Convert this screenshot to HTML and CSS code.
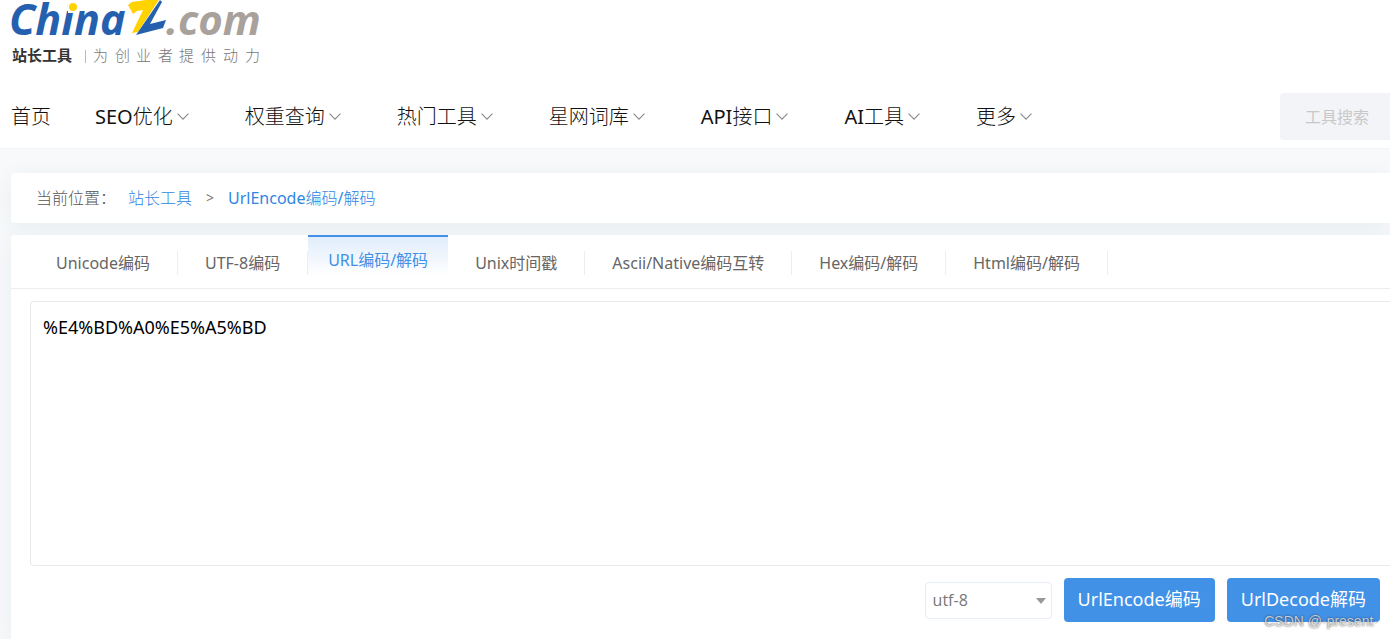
FILE: index.html
```html
<!DOCTYPE html>
<html lang="zh-CN">
<head>
<meta charset="utf-8">
<title>UrlEncode编码/解码 - 站长工具</title>
<link rel="stylesheet" href="styles.css">
</head>
<body>
<header class="header">
  <a class="logo" href="#">
    <svg width="252" height="68" viewBox="0 0 252 68" role="img" aria-label="ChinaZ.com 站长工具">
      <text class="logo-china" x="-2" y="35">China</text>
      <path d="M57 -2H70L67 13H57Z" fill="#fff"/>
      <circle cx="62" cy="7" r="4" fill="#ffd200"/>
      <path d="M117 5 L121 2 L149 -2 L127 32 L121 33 L132 10 L126 11 L122 14 Z" fill="#ffd200"/>
      <path d="M149 0 L151 2 L139 24 L155 20 L152 28 L125 35 Z" fill="#2560ae"/>
      <text class="logo-com" x="155" y="35">.com</text>
      <text class="logo-name" x="1" y="61">站长工具</text>
      <path d="M74.500 50V63" stroke="#bbb"/>
      <text class="logo-slogan" y="61" x="82 104 125 147 168 190 212 234">为创业者提供动力</text>
    </svg>
  </a>
  <div class="navbar">
    <nav class="nav">
      <a class="nav-item nav-home" href="#">首页</a>
      <a class="nav-item" href="#"><span><b>SEO</b>优化</span><svg class="chevron" viewBox="0 0 11 7"><path d="M.5 .5 5.500 5.500 10.500 .5"/></svg></a>
      <a class="nav-item" href="#">权重查询<svg class="chevron" viewBox="0 0 11 7"><path d="M.5 .5 5.500 5.500 10.500 .5"/></svg></a>
      <a class="nav-item" href="#">热门工具<svg class="chevron" viewBox="0 0 11 7"><path d="M.5 .5 5.500 5.500 10.500 .5"/></svg></a>
      <a class="nav-item" href="#">星网词库<svg class="chevron" viewBox="0 0 11 7"><path d="M.5 .5 5.500 5.500 10.500 .5"/></svg></a>
      <a class="nav-item" href="#"><span><b>API</b>接口</span><svg class="chevron" viewBox="0 0 11 7"><path d="M.5 .5 5.500 5.500 10.500 .5"/></svg></a>
      <a class="nav-item" href="#"><span><b>AI</b>工具</span><svg class="chevron" viewBox="0 0 11 7"><path d="M.5 .5 5.500 5.500 10.500 .5"/></svg></a>
      <a class="nav-item" href="#">更多<svg class="chevron" viewBox="0 0 11 7"><path d="M.5 .5 5.500 5.500 10.500 .5"/></svg></a>
    </nav>
    <input class="search" type="search" placeholder="工具搜索" aria-label="工具搜索">
  </div>
</header>
<main class="main">
  <div class="card crumbs">
    <span class="crumb-label">当前位置：</span>
    <a href="#">站长工具</a>
    <span class="crumb-sep">&gt;</span>
    <a href="#"><b>UrlEncode</b>编码<b>/</b>解码</a>
  </div>
  <section class="card tool">
    <nav class="tabs">
      <a class="tab" href="#">Unicode编码</a>
      <a class="tab" href="#">UTF-8编码</a>
      <a class="tab active" href="#" aria-current="page">URL编码/解码</a>
      <a class="tab" href="#">Unix时间戳</a>
      <a class="tab" href="#">Ascii/Native编码互转</a>
      <a class="tab" href="#">Hex编码/解码</a>
      <a class="tab" href="#">Html编码/解码</a>
    </nav>
    <form class="form">
      <textarea class="editor" aria-label="编码内容" spellcheck="false">%E4%BD%A0%E5%A5%BD</textarea>
      <div class="actions">
        <span class="charset">
          <select aria-label="字符编码"><option>utf-8</option><option>gb2312</option></select>
          <svg class="caret" viewBox="0 0 10 6"><path d="M0 0H10L5 6Z"/></svg>
        </span>
        <button class="btn" type="button">UrlEncode编码</button>
        <button class="btn" type="button">UrlDecode解码</button>
      </div>
    </form>
  </section>
</main>
<div class="watermark">CSDN @·present·</div>
</body>
</html>
```
FILE: styles.css
```css
* { box-sizing: border-box; }
body {
  margin: 0;
  min-height: 100vh;
  display: flex;
  flex-direction: column;
  position: relative;
  overflow: hidden;
  background: #f8f9fb;
  color: #666;
  font: 16px/24px "Noto Sans", "Noto Sans CJK SC", sans-serif;
}
a { color: #4191e7; text-decoration: none; }
b { font-weight: 400; }
.header { background: #fff; border-bottom: 1px solid #f3f4f6; }
.logo { display: block; padding-left: 11px; height: 68px; }
.logo svg { display: block; overflow: visible; }
.logo-china { font: italic 700 43px "Open Sans", sans-serif; fill: #2560ae; }
.logo-com { font: italic 700 42px "Open Sans", sans-serif; fill: #a9a19b; }
.logo-name { font: 700 15px "Noto Sans CJK SC", sans-serif; fill: #333; }
.logo-slogan { font: 300 15px "Noto Sans CJK SC", sans-serif; fill: #777; }
.navbar { display: flex; justify-content: space-between; padding: 25px 0 8px 11px; }
.nav { display: flex; align-items: center; gap: 56px; }
.nav-item {
  display: flex;
  align-items: center;
  gap: 4px;
  color: #111;
  font-size: 20px;
  font-weight: 300;
  line-height: 30px;
  white-space: nowrap;
}
.nav-home { margin-right: -12px; }
.chevron { width: 12px; height: 8px; fill: none; stroke: #888; }
.search {
  width: 110px;
  height: 47px;
  padding: 0 0 0 25px;
  border: 0;
  border-radius: 4px 0 0 4px;
  background: #f3f4f8;
  font: inherit;
}
.search::placeholder { color: #c8c8c8; opacity: 1; }
.main { flex: 1; display: flex; flex-direction: column; gap: 12px; padding: 24px 0 0 11px; }
.card { background: #fff; border-radius: 4px 0 0 4px; box-shadow: 0 4px 20px #dce8ea90; }
.crumbs { display: flex; align-items: center; padding: 13px 25px; font-weight: 300; }
.crumbs a { color: #2f86e4; }
.crumb-label { margin-right: 12px; color: #555; }
.crumb-sep { margin: 0 14px; font-size: 14px; font-weight: 400; color: #777; }
.tool { flex: 1; border-bottom-left-radius: 0; }
.tabs { display: flex; height: 54px; padding-left: 18px; border-bottom: 1px solid #eee; }
.tab {
  display: flex;
  height: 24px;
  margin-top: 16px;
  padding: 0 27px;
  border-right: 1px solid #eee;
  color: #666;
  white-space: nowrap;
}
.tab.active {
  height: 41px;
  margin-top: 0;
  padding: 11px 20px 0;
  border-right: 0;
  border-top: 2px solid #4191e7;
  background: linear-gradient(#e1edfb, #fff);
  color: #4191e7;
}
.form { display: flex; flex-direction: column; gap: 12px; padding: 12px 0 16px 19px; }
.editor {
  height: 265px;
  padding: 12px;
  border: 1px solid #eaeaea;
  border-right: 0;
  border-radius: 4px 0 0 4px;
  outline: 0;
  resize: none;
  color: #000;
  font: 18px/27px "Noto Sans", "Noto Sans CJK SC", sans-serif;
}
.actions { display: flex; justify-content: flex-end; align-items: center; gap: 12px; padding-right: 10px; }
.charset { position: relative; display: flex; }
.charset select {
  appearance: none;
  width: 127px;
  height: 37px;
  padding: 0 7px;
  border: 1px solid #e6edf7;
  border-radius: 4px;
  background: #fff;
  color: #777;
  font: 16px/22px "Open Sans", sans-serif;
}
.caret { position: absolute; right: 6px; top: 16px; width: 10px; height: 6px; fill: #999; pointer-events: none; }
.btn {
  height: 44px;
  padding: 0 14px 2px;
  border: 0;
  border-radius: 4px;
  background: #4191e7;
  color: #fff;
  font: 18px/27px "Noto Sans", "Noto Sans CJK SC", sans-serif;
}
.watermark {
  position: absolute;
  right: 12px;
  bottom: 8px;
  color: #ffffffb0;
  font: 14px/20px "Liberation Sans", sans-serif;
  text-shadow: 0 0 2px #333;
}
```
